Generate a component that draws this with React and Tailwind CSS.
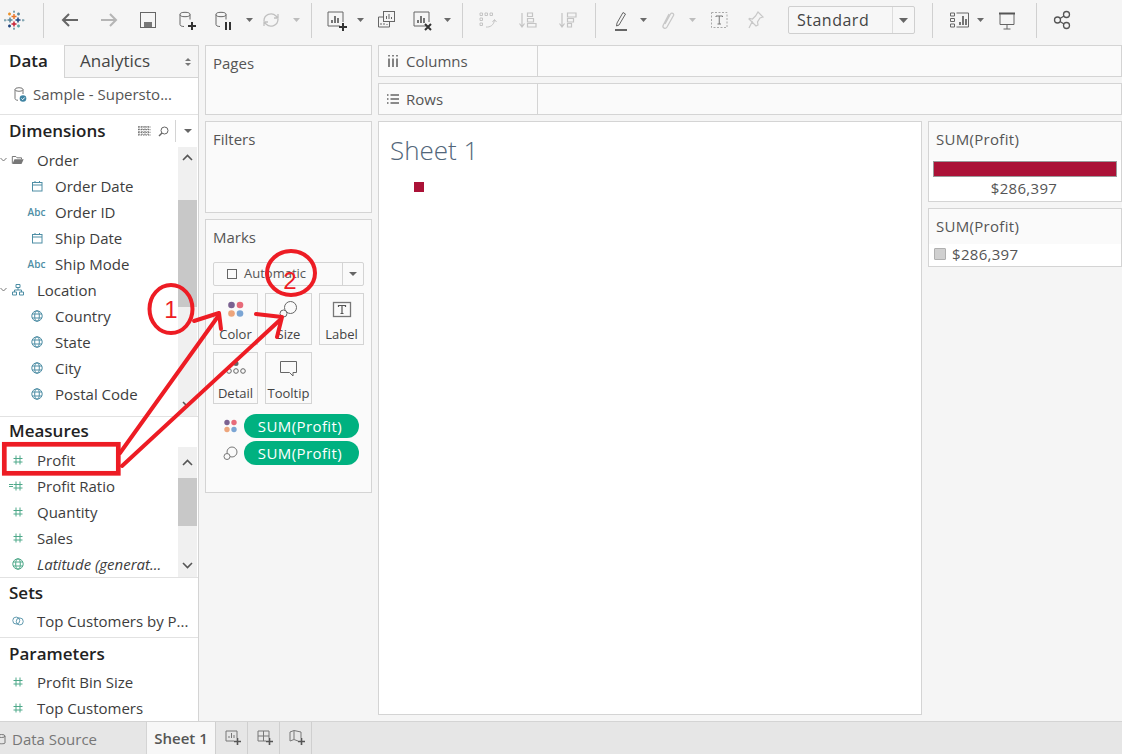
import React from 'react';

const Svg = ({ w = 24, h = 24, children, className = '' }) => (
  <svg width={w} height={h} viewBox={`0 0 ${w} ${h}`} fill="none" className={className}>
    {children}
  </svg>
);

const Caret = ({ light, className = '' }) => (
  <div className={`w-[8px] flex justify-center ${className}`}>
    <svg width="7" height="4" viewBox="0 0 7 4">
      <path d="M0 0h7L3.500 4z" fill={light ? '#bdbdbd' : '#6a6a6a'} />
    </svg>
  </div>
);

const Sep = ({ className = '' }) => <div className={`w-px h-[35px] bg-[#d0d0d0] ${className}`} />;

const TableauLogo = () => (
  <Svg>
    <g strokeWidth="1.500">
      <path d="M12 6v5M9.500 8.500h5" stroke="#e8762b" />
      <path d="M12 13.500v5M9.500 16h5" stroke="#c72035" />
      <path d="M8 9.500v5M5.500 12h5" stroke="#5b879b" />
      <path d="M16 9.500v5M13.500 12h5" stroke="#1f447e" />
      <path d="M7.500 4.500v3M6 6h3" stroke="#eb9129" />
      <path d="M16.500 4.500v3M15 6h3" stroke="#5b879b" />
      <path d="M7.500 16.500v3M6 18h3" stroke="#1f447e" />
      <path d="M16.500 16.500v3M15 18h3" stroke="#5fa2a5" />
      <path d="M12 2.500v2.500M11 3.700h2M12 19.500v2.500M11 20.700h2M3 11v2.500M2 12.200h2.500M21 11v2.500M20 12.200h2.500" stroke="#7099a6" strokeWidth="1" />
    </g>
  </Svg>
);

const Plus = ({ x, y, c = '#333' }) => <path d={`M${x} ${y - 4}v8M${x - 4} ${y}h8`} stroke={c} strokeWidth="2" />;

const Cyl = ({ c = '#666' }) => (
  <>
    <ellipse cx="10" cy="6.500" rx="5" ry="2.200" stroke={c} />
    <path d="M5 6.500v10c0 1.200 1.500 2 4 2M15 6.500v5" stroke={c} />
  </>
);

const BarsFrame = () => (
  <>
    <path d="M16 18H4V4h15v10" stroke="#666" />
    <path d="M8 15v-3M11 15V8M14 15v-5" stroke="#555" strokeWidth="1.600" />
  </>
);

const icons = {
  back: <path d="M20 12H5M11 6l-6 6 6 6" stroke="#666" strokeWidth="2" />,
  forward: <path d="M4 12h15M13 6l6 6-6 6" stroke="#b5b5b5" strokeWidth="2" />,
  save: (
    <>
      <rect x="4.500" y="4.500" width="15" height="15" stroke="#666" />
      <path d="M8 19v-5h8v5z" fill="#777" />
    </>
  ),
  newds: <><Cyl /><Plus x="17" y="18" /></>,
  pause: <><Cyl /><path d="M15 14v8M19 14v8" stroke="#333" strokeWidth="2" /></>,
  refresh: <path d="M5 13a7 7 0 0 1 12-5l2 2M19 11a7 7 0 0 1-12 5l-2-2M19 6v4h-4M5 18v-4h4" stroke="#c0c0c0" strokeWidth="1.300" />,
  newsheet: <><BarsFrame /><Plus x="19" y="19" /></>,
  dup: (
    <>
      <rect x="9.500" y="3.500" width="11" height="10" fill="#f5f5f5" stroke="#666" />
      <path d="M12.500 11V8M15 11V6M17.500 11V9" stroke="#666" />
      <path d="M9 9H4.500v10h11v-5" stroke="#666" />
      <path d="M7 17v-2M10 17v-2M13 17v-1" stroke="#666" />
    </>
  ),
  clear: <><BarsFrame /><path d="M15 16l6 6M21 16l-6 6" stroke="#333" strokeWidth="2" /></>,
  swap: (
    <>
      <path d="M5 5h2.500v2.500H5zM10 5h2.500v2.500H10zM15 5h2.500v2.500H15zM5 10h2.500v2.500H5zM5 15h2.500v2.500H5z" stroke="#c4c4c4" />
      <path d="M11 19c4 .5 8-2 8.500-7M17.500 14l2-2.500 2 2.500" stroke="#c4c4c4" />
    </>
  ),
  sortAsc: <path d="M7 5v14M4.500 15.500L7 19l2.500-3.500M12.500 5h5v3.500h-5zM12.500 10.500h6v3.500h-6zM12.500 15.500h8.500v3.500h-8.500z" stroke="#c4c4c4" strokeWidth="1.200" />,
  sortDesc: <path d="M7 5v14M4.500 15.500L7 19l2.500-3.500M12.500 5h8.500v4h-8.500zM12.500 10.500h6v3.500h-6zM12.500 15.500h4v3.500h-4z" stroke="#c4c4c4" strokeWidth="1.200" />,
  highlight: (
    <>
      <path d="M10 17l-2.500 1 .5-3 6-10.500 2.500 1.500z" stroke="#666" />
      <path d="M6 22h12" stroke="#666" strokeWidth="2" />
    </>
  ),
  clip: <path d="M9 16l5.500-10c1-1.800 4-.5 3 1.500L11 19c-1.500 2.500-5 1-3.800-1.800L13 6" stroke="#c8c8c8" strokeWidth="1.300" />,
  text: (
    <>
      <rect x="4.500" y="4.500" width="15.500" height="15" stroke="#aaa" strokeDasharray="2 1.500" />
      <path d="M9 9V8h6.500v1M12.250 8v8M10.500 16h3.500" stroke="#777" />
    </>
  ),
  pin: <path d="M14 4l5 5-3 1-2.500 4 .5 3-2 1-7-7 .5-.5 3 .5 3-3zM8.500 13L5 20" stroke="#c8c8c8" strokeWidth="1.200" />,
  showme: (
    <>
      <path d="M3.500 5h4v3h-4zM3.500 10.500h4v3h-4zM3.500 16h4v3h-4zM9.500 5h12v14h-12" stroke="#666" />
      <path d="M13 17v-3M16 17V8M19 17v-6" stroke="#555" strokeWidth="1.600" />
    </>
  ),
  present: (
    <>
      <path d="M4 5.500h16" stroke="#555" strokeWidth="2" />
      <path d="M5 6v10.500h14V6M12 16.500V21M8.500 21h7" stroke="#666" />
    </>
  ),
  share: (
    <>
      <circle cx="16.500" cy="6.500" r="3" stroke="#555" strokeWidth="1.300" />
      <circle cx="7.500" cy="12" r="3" stroke="#555" strokeWidth="1.300" />
      <circle cx="16.500" cy="17.500" r="3" stroke="#555" strokeWidth="1.300" />
      <path d="M10 10.500l4-2.500M10 13.500l4 2.500" stroke="#555" strokeWidth="1.300" />
    </>
  ),
};

const Tool = ({ name, className = '' }) => (
  <div className={`w-[24px] h-[24px] shrink-0 ${className}`}>
    <Svg>{icons[name]}</Svg>
  </div>
);

const Toolbar = () => (
  <div className="h-[45px] flex items-center shrink-0 pb-[5px]">
    <div className="w-[24px] h-[24px] ml-[2px]"><TableauLogo /></div>
    <Sep className="ml-[17px]" />
    <Tool name="back" className="ml-[14px]" />
    <Tool name="forward" className="ml-[15px]" />
    <Tool name="save" className="ml-[15px]" />
    <Tool name="newds" className="ml-[15px]" />
    <Tool name="pause" className="ml-[12px]" />
    <Caret className="ml-[10px]" />
    <Tool name="refresh" className="ml-[6px]" />
    <Caret light className="ml-[9px]" />
    <Sep className="ml-[11px]" />
    <Tool name="newsheet" className="ml-[12px]" />
    <Caret className="ml-[8px]" />
    <Tool name="dup" className="ml-[10px]" />
    <Tool name="clear" className="ml-[12px]" />
    <Caret className="ml-[9px]" />
    <Sep className="ml-[11px]" />
    <Tool name="swap" className="ml-[12px]" />
    <Tool name="sortAsc" className="ml-[16px]" />
    <Tool name="sortDesc" className="ml-[16px]" />
    <Sep className="ml-[16px]" />
    <Tool name="highlight" className="ml-[13px]" />
    <Caret className="ml-[6px]" />
    <Tool name="clip" className="ml-[9px]" />
    <Caret light className="ml-[8px]" />
    <Tool name="text" className="ml-[11px]" />
    <Tool name="pin" className="ml-[13px]" />
    <div className="ml-[20px] w-[127px] h-[28px] flex border border-[#cfcfcf] rounded-[2px] bg-[#f7f7f7]">
      <div className="w-[103px] pl-[8px] text-[16px] leading-[26px] text-[#444] tracking-[0.5px]">Standard</div>
      <div className="flex-1 border-l border-[#dcdcdc] flex items-center justify-center">
        <svg width="9" height="5" viewBox="0 0 9 5"><path d="M0 0h9L4.500 5z" fill="#666" /></svg>
      </div>
    </div>
    <Sep className="ml-[17px]" />
    <Tool name="showme" className="ml-[14px]" />
    <Caret className="ml-[5px]" />
    <Tool name="present" className="ml-[11px]" />
    <Sep className="ml-[17px]" />
    <Tool name="share" className="ml-[13px]" />
  </div>
);

const Calendar = () => (
  <Svg w={14} h={14}>
    <rect x="2.500" y="3.500" width="9.500" height="8.500" stroke="#4e8ea5" />
    <path d="M2.500 6h9.500M5 2v2M9.500 2v2" stroke="#4e8ea5" />
  </Svg>
);

const Abc = () => <span className="text-[10px] font-semibold text-[#4e8ea5] leading-none">Abc</span>;

const Globe = ({ c = '#4e8ea5' }) => (
  <Svg w={14} h={14}>
    <circle cx="7" cy="7" r="5.200" stroke={c} />
    <ellipse cx="7" cy="7" rx="2.300" ry="5.200" stroke={c} />
    <path d="M2 5h10M2 9h10" stroke={c} />
  </Svg>
);

const Hash = ({ left }) => (
  <div className="relative">
    {left && <div className="absolute left-[-2px] top-[5px] w-[4px] h-[3px] border-y border-[#4fa98a]" />}
    <Svg w={14} h={14}>
      <path d="M5 2.500v9M9 2.500v9M2.500 5.500h9M2.500 9h9" stroke="#4fa98a" />
    </Svg>
  </div>
);

const Folder = () => (
  <Svg w={16} h={14}>
    <path d="M1.500 11V3h4l1.500 1.500h5V6" stroke="#666" />
    <path d="M1.500 11.500L4 6h10.500l-2.500 5.500z" fill="#777" />
  </Svg>
);

const Hier = () => (
  <Svg w={14} h={14}>
    <path d="M5 1.500h4v3H5zM1.500 9h4v3h-4zM8.500 9h4v3h-4zM7 4.500V7M3.500 9V7h7v2" stroke="#4e8ea5" />
  </Svg>
);

const SetIcon = () => (
  <Svg w={16} h={14}>
    <circle cx="6" cy="6.500" r="4" stroke="#4e8ea5" />
    <circle cx="10" cy="7.500" r="4" stroke="#4e8ea5" />
  </Svg>
);

const Chevron = () => (
  <svg width="7" height="5" viewBox="0 0 7 5" className="shrink-0">
    <path d="M.5 1l3 3 3-3" stroke="#777" fill="none" />
  </svg>
);

const Row = ({ icon, label, italic, chevron, nested }) => (
  <div className="h-[26px] flex items-center relative">
    {chevron && <div className="absolute left-0 top-[10px] flex"><Chevron /></div>}
    <div className={nested ? 'w-[55px] pl-[28px] pr-[10px] flex justify-center shrink-0' : 'w-[37px] pl-[11px] pr-[12px] flex justify-center shrink-0'}>
      {icon}
    </div>
    <span className={`text-[15px] text-[#3d3d3d] whitespace-nowrap ${italic ? 'italic' : ''}`}>{label}</span>
  </div>
);

const Arrow = ({ up }) => (
  <svg width="11" height="7" viewBox="0 0 11 7">
    <path d={up ? 'M1 6l4.500-4.500L10 6' : 'M1 1l4.500 4.500L10 1'} stroke="#555" strokeWidth="1.600" fill="none" />
  </svg>
);

const Heading = ({ children, className = '' }) => (
  <div className={`pl-[9px] flex items-center text-[17px] font-semibold text-[#222] ${className}`}>{children}</div>
);

const Sidebar = () => (
  <div className="w-[199px] shrink-0 bg-white border-r border-[#d4d4d4] flex flex-col">
    <div className="h-[33px] flex">
      <div className="w-[65px] border-r border-[#d4d4d4] pl-[9px] text-[17px] font-semibold text-[#222] leading-[31px]">Data</div>
      <div className="flex-1 bg-[#f5f5f5] border-b border-[#d4d4d4] border-t pl-[15px] text-[17px] text-[#444] leading-[30px] flex justify-between pr-[7px]">
        <span>Analytics</span>
        <span className="flex flex-col justify-center gap-[2px]">
          <svg width="6" height="3" viewBox="0 0 6 3"><path d="M0 3h6L3 0z" fill="#777" /></svg>
          <svg width="6" height="3" viewBox="0 0 6 3"><path d="M0 0h6L3 3z" fill="#777" /></svg>
        </span>
      </div>
    </div>
    <div className="h-[37px] pb-[3px] border-b border-[#e2e2e2] flex items-center pl-[13px] gap-[5px] text-[15px] text-[#555]">
      <Svg w={15} h={17}>
        <ellipse cx="6" cy="3.500" rx="4" ry="1.800" stroke="#777" />
        <path d="M2 3.500v9c0 1 1 1.700 3 1.800M10 3.500V8" stroke="#777" />
        <circle cx="10" cy="12.500" r="3.300" fill="#3f84a3" />
        <path d="M8.500 12.500l1.200 1.200 2-2.200" stroke="#fff" />
      </Svg>
      <span>Sample - Supersto...</span>
    </div>

    <div className="h-[32px] flex items-center pl-[9px] text-[17px] font-semibold text-[#222]">
      <span className="w-[129px]">Dimensions</span>
      <svg width="13" height="10" viewBox="0 0 13 10">
        <path d="M0 1h13M0 3.700h13M0 6.300h13M0 9h13M1 0v10M4 0v10M7 0v10M10 0v10" stroke="#666" strokeDasharray="1.500 1" />
      </svg>
      <svg width="11" height="11" viewBox="0 0 11 11" className="ml-[7px]">
        <circle cx="6.500" cy="4.500" r="3.500" stroke="#666" fill="none" />
        <path d="M4 7l-3 3" stroke="#666" strokeWidth="1.500" />
      </svg>
      <div className="w-px h-[22px] bg-[#d4d4d4] ml-[6px]" />
      <svg width="8" height="4" viewBox="0 0 8 4" className="ml-[8px]"><path d="M0 0h8L4 4z" fill="#666" /></svg>
    </div>
    <div className="h-[270px] flex border-b border-[#e2e2e2]">
      <div className="w-[178px]">
        <Row chevron icon={<Folder />} label="Order" />
        <Row nested icon={<Calendar />} label="Order Date" />
        <Row nested icon={<Abc />} label="Order ID" />
        <Row nested icon={<Calendar />} label="Ship Date" />
        <Row nested icon={<Abc />} label="Ship Mode" />
        <Row chevron icon={<Hier />} label="Location" />
        <Row nested icon={<Globe />} label="Country" />
        <Row nested icon={<Globe />} label="State" />
        <Row nested icon={<Globe />} label="City" />
        <Row nested icon={<Globe />} label="Postal Code" />
      </div>
      <div className="w-[19px] bg-[#f0f0f0] flex flex-col">
        <div className="h-[21px] flex items-center justify-center"><Arrow up /></div>
        <div className="h-[32px]" />
        <div className="h-[107px] bg-[#c8c8c8]" />
        <div className="flex-1 flex items-end justify-center pb-[8px]"><Arrow /></div>
      </div>
    </div>

    <Heading className="h-[30px] pb-[2px]">Measures</Heading>
    <div className="h-[131px] flex border-b border-[#e2e2e2]">
      <div className="w-[178px]">
        <Row icon={<Hash />} label="Profit" />
        <Row icon={<Hash left />} label="Profit Ratio" />
        <Row icon={<Hash />} label="Quantity" />
        <Row icon={<Hash />} label="Sales" />
        <Row icon={<Globe c="#4fa98a" />} label="Latitude (generat..." italic />
      </div>
      <div className="w-[19px] bg-[#f0f0f0] flex flex-col">
        <div className="h-[31px] flex items-center justify-center"><Arrow up /></div>
        <div className="h-[48px] bg-[#c8c8c8]" />
        <div className="flex-1 flex items-end justify-center pb-[8px]"><Arrow /></div>
      </div>
    </div>

    <Heading className="h-[30px]">Sets</Heading>
    <div className="border-b border-[#e2e2e2] h-[30px]">
      <Row icon={<SetIcon />} label="Top Customers by P..." />
    </div>

    <Heading className="h-[31px]">Parameters</Heading>
    <Row icon={<Hash />} label="Profit Bin Size" />
    <Row icon={<Hash />} label="Top Customers" />
  </div>
);

const Panel = ({ title, className = '' }) => (
  <div className={`w-[167px] border border-[#d4d4d4] bg-[#fafafa] pl-[7px] pt-[6px] text-[15px] text-[#555] ${className}`}>
    {title}
  </div>
);

const CardIcon = ({ name }) => {
  if (name === 'color') {
    return (
      <Svg w={20} h={20}>
        <circle cx="5.500" cy="5" r="3.300" fill="#7b6291" />
        <circle cx="14" cy="5" r="3.300" fill="#e76b7a" />
        <circle cx="5.500" cy="13.500" r="3.300" fill="#eda57c" />
        <circle cx="14" cy="13.500" r="3.300" fill="#7ba5d4" />
      </Svg>
    );
  }
  if (name === 'size') {
    return (
      <Svg w={20} h={20}>
        <circle cx="11.500" cy="7.500" r="6" stroke="#666" />
        <circle cx="4.500" cy="13.500" r="3.500" fill="#f9f9f9" stroke="#666" />
      </Svg>
    );
  }
  if (name === 'label') {
    return (
      <Svg w={20} h={20}>
        <rect x="1.500" y="2.500" width="17" height="14" stroke="#777" strokeWidth="1.300" />
        <path d="M6.500 7V5.500h7V7M10 5.500V13.500M8.500 13.500h3" stroke="#555" strokeWidth="1.200" />
      </Svg>
    );
  }
  if (name === 'detail') {
    return (
      <Svg w={22} h={20}>
        <circle cx="11" cy="4.500" r="2.500" fill="#666" />
        <circle cx="4" cy="12" r="2.300" stroke="#666" />
        <circle cx="11" cy="12" r="2.300" stroke="#666" />
        <circle cx="18" cy="12" r="2.300" stroke="#666" />
      </Svg>
    );
  }
  return (
    <Svg w={20} h={20}>
      <path d="M1.500 2.500h16v11h-3.500v3.500l-3.500-3.500h-9z" stroke="#666" />
    </Svg>
  );
};

const MarkCard = ({ icon, label, width }) => (
  <div className={`${width} h-[52px] border border-[#d4d4d4] flex flex-col items-center pt-[6px] text-[13px] text-[#444] leading-[17px]`}>
    <div className="h-[26px]"><CardIcon name={icon} /></div>
    <span className="whitespace-nowrap">{label}</span>
  </div>
);

const Pill = ({ icon }) => (
  <div className="flex items-center h-[24px]">
    <div className="w-[38px] pl-[17px] flex shrink-0">
      {icon === 'color' ? (
        <svg width="15" height="15" viewBox="0 0 15 15">
          <circle cx="4" cy="3.500" r="2.700" fill="#7b6291" />
          <circle cx="11" cy="3.500" r="2.700" fill="#e76b7a" />
          <circle cx="4" cy="10.500" r="2.700" fill="#eda57c" />
          <circle cx="11" cy="10.500" r="2.700" fill="#7ba5d4" />
        </svg>
      ) : (
        <svg width="15" height="15" viewBox="0 0 15 15" fill="none">
          <circle cx="9" cy="6" r="5" stroke="#777" />
          <circle cx="4" cy="10.500" r="3" fill="#fafafa" stroke="#777" />
        </svg>
      )}
    </div>
    <div className="w-[115px] h-[24px] pr-[3px] rounded-full bg-[#00b180] text-white text-[15px] tracking-[0.4px] leading-[24px] text-center">SUM(Profit)</div>
  </div>
);

const MarksPanel = () => (
  <div className="w-[167px] h-[274px] border border-[#d4d4d4] bg-[#fafafa] px-[7px] mt-[6px]">
    <div className="h-[35px] pt-[6px] text-[15px] text-[#555]">Marks</div>
    <div className="mt-[7px] h-[24px] border border-[#d4d4d4] rounded-[2px] flex items-center text-[13px] text-[#555]">
      <div className="w-[128px] flex items-center pl-[13px] gap-[7px]">
        <div className="w-[10px] h-[10px] border border-[#666]" />
        <span>Automatic</span>
      </div>
      <div className="flex-1 self-stretch border-l border-[#d4d4d4] flex items-center justify-center">
        <svg width="8" height="4" viewBox="0 0 8 4"><path d="M0 0h8L4 4z" fill="#666" /></svg>
      </div>
    </div>
    <div className="mt-[7px] flex gap-[7px]">
      <MarkCard icon="color" label="Color" width="w-[45px]" />
      <MarkCard icon="size" label="Size" width="w-[47px]" />
      <MarkCard icon="label" label="Label" width="w-[45px]" />
    </div>
    <div className="mt-[7px] flex gap-[7px]">
      <MarkCard icon="detail" label="Detail" width="w-[45px]" />
      <MarkCard icon="tooltip" label="Tooltip" width="w-[47px]" />
    </div>
    <div className="mt-[10px] ml-[-7px] flex flex-col gap-[3px]">
      <Pill icon="color" />
      <Pill icon="size" />
    </div>
  </div>
);

const Shelf = ({ icon, label, className = '' }) => (
  <div className={`h-[32px] flex border border-[#d4d4d4] bg-[#fafafa] ${className}`}>
    <div className="w-[159px] border-r border-[#d4d4d4] flex items-center pl-[8px] gap-[7px] text-[15px] text-[#555]">
      {icon}
      <span>{label}</span>
    </div>
  </div>
);

const Legends = () => (
  <div className="w-[194px] shrink-0 flex flex-col gap-[6px] text-[15px] tracking-[0.3px] text-[#555]">
    <div className="h-[81px] border border-[#d4d4d4] bg-white">
      <div className="h-[38px] bg-[#fafafa] pl-[7px] pt-[6px]">SUM(Profit)</div>
      <div className="mx-[4px] h-[16px] bg-[#ab1237] border border-[#9a9a9a] mt-[1px]" />
      <div className="text-center leading-[22px] pr-[2px]">$286,397</div>
    </div>
    <div className="h-[59px] border border-[#d4d4d4] bg-white">
      <div className="h-[35px] bg-[#fafafa] pl-[7px] pt-[6px]">SUM(Profit)</div>
      <div className="flex items-center h-[20px] pl-[5px] gap-[6px]">
        <div className="w-[12px] h-[12px] bg-[#d0d0d0] border border-[#b0b0b0] rounded-[1px]" />
        <span>$286,397</span>
      </div>
    </div>
  </div>
);

const TabAdd = ({ kind }) => (
  <div className="w-[32px] h-full border-r border-[#cfcfcf] flex items-center justify-center pl-[3px]">
    <svg width="18" height="18" viewBox="0 0 18 18" fill="none">
      {kind === 'sheet' && <path d="M10 12H2V2h11v7M5 9V7M7.500 9V4M10 9V6" stroke="#777" />}
      {kind === 'dash' && <path d="M10 12H2V2h11v7M2 7h11M7.500 2v10" stroke="#777" />}
      {kind === 'story' && <path d="M10 12l-4-1.500L2 12V3l4-1.500L13 3v6M6 2v8" stroke="#777" />}
      <path d="M13.500 9v7M10 12.500h7" stroke="#555" strokeWidth="1.600" />
    </svg>
  </div>
);

const TabBar = () => (
  <div className="h-[33px] shrink-0 bg-[#e6e6e6] border-t border-[#d4d4d4] flex items-stretch text-[15px]">
    <div className="w-[150px] flex items-center text-[#777] gap-[6px] ml-[-3px] pt-[3px] border-r border-[#d4d4d4]">
      <svg width="9" height="11" viewBox="0 0 9 11" fill="none">
        <ellipse cx="4.500" cy="2" rx="3.500" ry="1.500" stroke="#777" />
        <path d="M1 2v7c0 1 7 1 7 0V2" stroke="#777" />
      </svg>
      <span>Data Source</span>
    </div>
    <div className="w-[69px] bg-[#f7f7f7] border-r border-[#cfcfcf] flex items-center justify-center font-semibold text-[#555]">Sheet 1</div>
    <TabAdd kind="sheet" />
    <TabAdd kind="dash" />
    <TabAdd kind="story" />
  </div>
);

// the red marks someone painted over the screenshot
const Annotations = () => (
  <svg className="absolute inset-0 pointer-events-none" width="1122" height="754" viewBox="0 0 1122 754" fill="none">
    <g stroke="#ed1c24" strokeLinecap="round" strokeLinejoin="round">
      <rect x="4.300" y="444.300" width="114" height="29" strokeWidth="4.700" strokeLinecap="butt" strokeLinejoin="miter" />
      <path d="M120 453L219 315M122 466L281 319" strokeWidth="4" />
      <path d="M194 321L219 313L221 329" strokeWidth="4" />
      <path d="M256 314L282 317L277 337" strokeWidth="4" />
      <ellipse cx="171" cy="309" rx="21.500" ry="24" strokeWidth="4" />
      <ellipse cx="291" cy="273" rx="24" ry="22" strokeWidth="4" />
    </g>
    <text x="171" y="318" textAnchor="middle" fontSize="24" fill="#ed1c24" fontFamily="'Liberation Sans', sans-serif">1</text>
    <text x="290" y="289" textAnchor="middle" fontSize="24" fill="#ed1c24" fontFamily="'Liberation Sans', sans-serif">2</text>
  </svg>
);

export default function App() {
  return (
    <div className="relative w-[1122px] h-[754px] overflow-hidden bg-[#f5f5f5] flex flex-col font-['Open_Sans',sans-serif]">
      <Toolbar />
      <div className="flex-1 min-h-0 flex">
        <Sidebar />
        <div className="w-[167px] ml-[6px] shrink-0 flex flex-col">
          <Panel title="Pages" className="h-[70px]" />
          <Panel title="Filters" className="h-[92px] mt-[6px]" />
          <MarksPanel />
        </div>
        <div className="flex-1 ml-[6px] flex flex-col min-w-0">
          <Shelf
            label="Columns"
            icon={<svg width="12" height="12" viewBox="0 0 12 12"><path d="M2 0v1.500M6 0v1.500M10 0v1.500M2 3.500V12M6 3.500V12M10 3.500V12" stroke="#666" strokeWidth="1.600" /></svg>}
          />
          <Shelf
            label="Rows"
            className="mt-[6px]"
            icon={<svg width="12" height="12" viewBox="0 0 12 12"><path d="M0 2h1.500M0 6h1.500M0 10h1.500M3.500 2H12M3.500 6H12M3.500 10H12" stroke="#666" strokeWidth="1.600" /></svg>}
          />
          <div className="flex-1 min-h-0 flex mt-[6px] gap-[6px]">
            <div className="w-[544px] h-[594px] border border-[#d4d4d4] bg-white pl-[11px]">
              <div className="text-[26px] font-light leading-[34px] text-[#52667a] pt-[11px]">Sheet 1</div>
              <div className="w-[10px] h-[10px] bg-[#ab1237] ml-[24px] mt-[15px]" />
            </div>
            <Legends />
          </div>
        </div>
      </div>
      <TabBar />
      <Annotations />
    </div>
  );
}
